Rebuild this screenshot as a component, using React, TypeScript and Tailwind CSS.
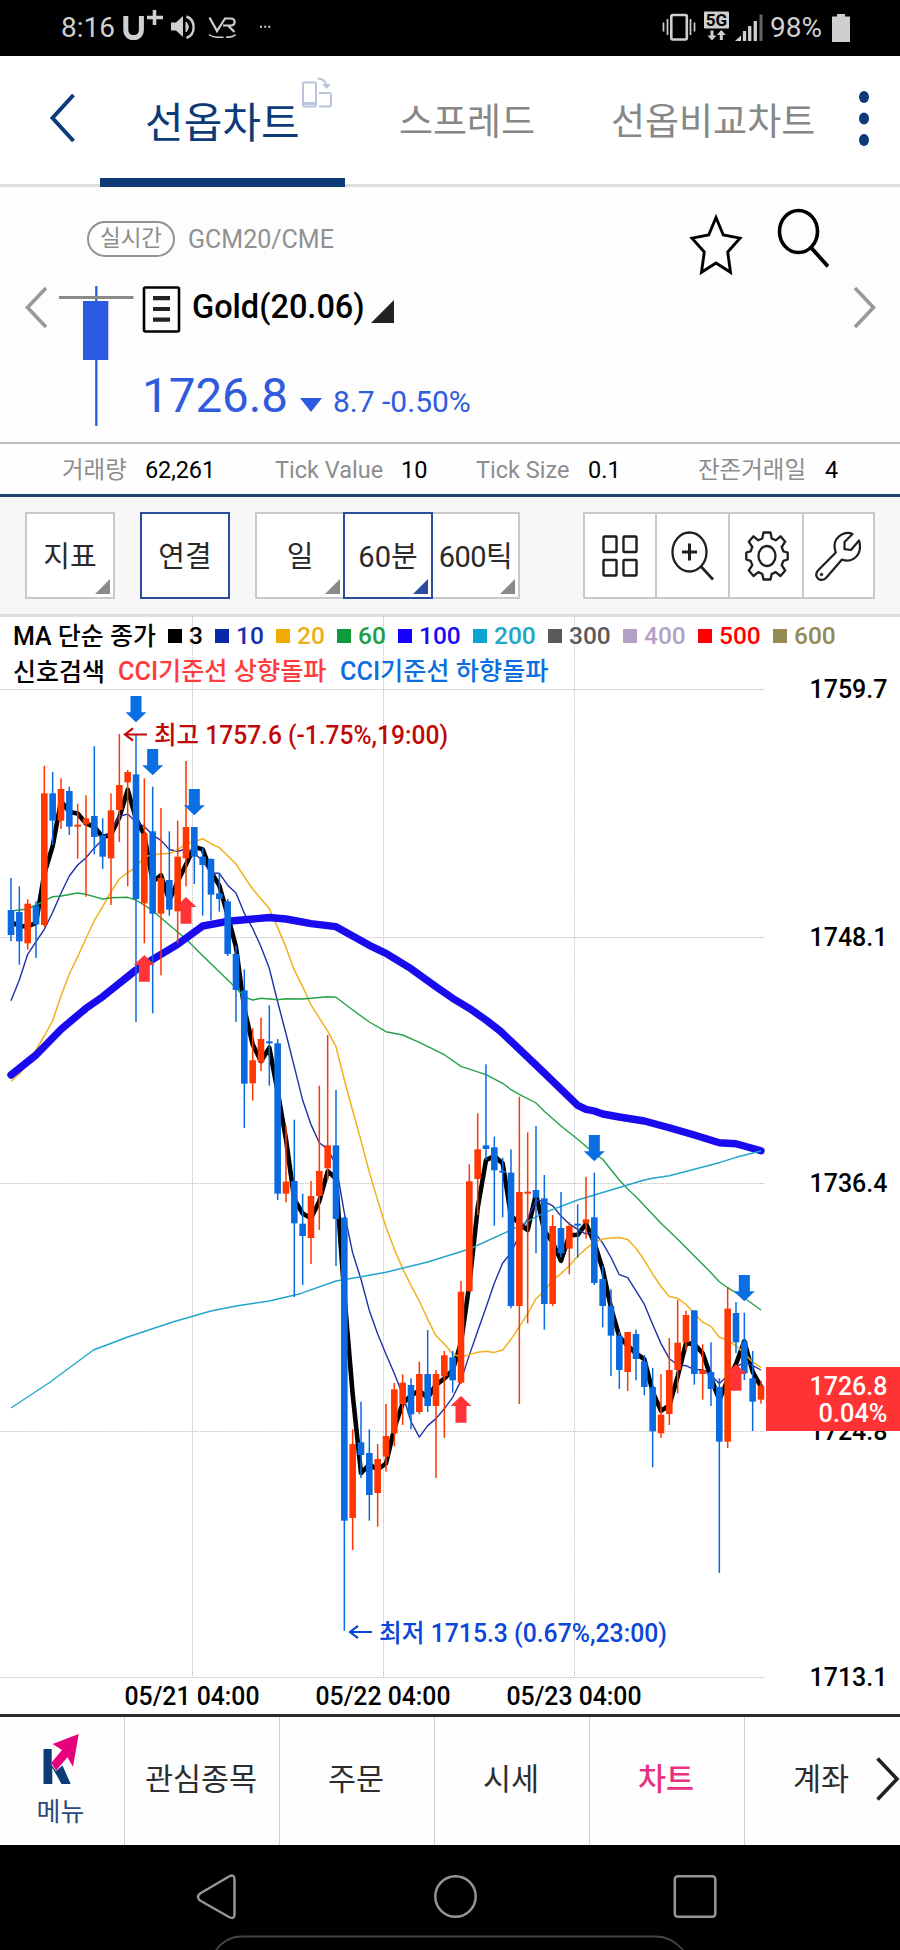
import React from "react";

const FONT = "font-['Roboto','Noto_Sans_CJK_KR',sans-serif]";

/* ---------- chart data ---------- */

type Row = [string, number, number, number, number];

// kind (B falling, R rising), high, body top, body bottom, low; three units per pixel below `base`
const SESSIONS: { base: number; rows: Row[] }[] = [
  {
    base: 680,
    rows: [
      ["B", 594, 690, 765, 784], ["B", 619, 696, 784, 854], ["R", 658, 671, 790, 809], ["B", 664, 677, 733, 834],
      ["R", 257, 340, 735, 740], ["B", 276, 340, 422, 495], ["R", 295, 327, 422, 447], ["B", 320, 333, 440, 465],
      ["R", 371, 434, 440, 536], ["R", 346, 415, 433, 650], ["B", 199, 408, 471, 523], ["B", 415, 466, 530, 567],
      ["R", 340, 391, 535, 675], ["R", 162, 315, 390, 486], ["R", 270, 276, 307, 619], ["B", 165, 283, 657, 1026],
      ["R", 295, 460, 670, 790], ["B", 320, 454, 701, 1000], ["R", 384, 594, 701, 886], ["B", 454, 600, 689, 707],
      ["R", 422, 530, 694, 790], ["R", 243, 441, 535, 619], ["B", 441, 441, 530, 612], ["B", 505, 530, 555, 707],
      ["B", 535, 537, 644, 720], ["B", 580, 640, 657, 695], ["B", 657, 664, 822, 828], ["B", 797, 822, 930, 1026],
      ["B", 868, 931, 1211, 1344],
    ],
  },
  {
    base: 900,
    rows: [
      ["R", 385, 481, 550, 602], ["R", 353, 417, 487, 513], ["B", 316, 424, 430, 557], ["B", 417, 430, 881, 900],
      ["R", 678, 845, 881, 907], ["B", 659, 843, 970, 1191], ["B", 881, 971, 1008, 1155], ["R", 843, 888, 1014, 1092],
      ["R", 557, 813, 888, 990], ["R", 405, 736, 805, 840], ["B", 570, 736, 957, 1098], ["B", 950, 953, 1862, 2192],
    ],
  },
  {
    base: 1200,
    rows: [
      ["R", 688, 732, 954, 1050], ["B", 605, 727, 765, 834], ["B", 688, 759, 885, 962], ["R", 732, 777, 879, 980],
      ["R", 612, 708, 770, 815], ["R", 549, 568, 700, 739], ["R", 523, 548, 612, 675], ["B", 535, 555, 643, 688],
      ["R", 485, 522, 636, 643], ["B", 390, 522, 618, 636], ["R", 510, 522, 618, 834], ["R", 453, 466, 529, 714],
      ["B", 453, 472, 541, 578], ["R", 243, 275, 548, 552],
    ],
  },
  {
    base: 1040,
    rows: [
      ["R", 373, 424, 754, 754], ["R", 220, 328, 417, 525], ["B", 73, 316, 327, 360], ["B", 290, 322, 391, 557],
      ["B", 353, 392, 398, 532], ["B", 328, 398, 798, 805], ["R", 170, 456, 798, 1092], ["R", 277, 455, 461, 850],
      ["B", 258, 450, 473, 640], ["B", 405, 475, 792, 869], ["R", 525, 558, 792, 798], ["B", 456, 564, 640, 652],
      ["R", 546, 558, 626, 703], ["B", 493, 551, 557, 653], ["R", 411, 538, 550, 596], ["B", 398, 532, 729, 735],
      ["B", 678, 717, 798, 862], ["B", 748, 798, 887, 1008], ["B", 875, 887, 990, 1047], ["R", 876, 876, 996, 1053],
      ["B", 869, 882, 957, 1021], ["B", 945, 964, 1041, 1066], ["B", 984, 1041, 1174, 1282],
    ],
  },
  {
    base: 1100,
    rows: [
      ["R", 822, 944, 1000, 1014], ["R", 714, 810, 942, 975], ["R", 600, 728, 810, 880], ["R", 632, 645, 727, 750],
      ["B", 631, 631, 822, 854], ["R", 733, 810, 822, 899], ["B", 727, 816, 867, 918], ["B", 835, 861, 1025, 1419],
      ["R", 562, 626, 1025, 1044], ["B", 606, 639, 727, 759], ["B", 638, 724, 820, 840], ["B", 753, 835, 905, 993],
      ["R", 842, 857, 899, 911],
    ],
  },
];

const CANDLES = SESSIONS.flatMap(({ base, rows }) =>
  rows.map(([kind, h, t, b, l]) => ({
    up: kind === "R",
    high: base + h / 3,
    top: base + t / 3,
    bottom: base + b / 3,
    low: base + l / 3,
  })),
);

const px = (i: number) => 11 + i * 8.3333;
const closes = CANDLES.map((c) => (c.up ? c.top + 0.5 : c.bottom - 0.5));

function average(period: number, lead: number[]): number[][] {
  return closes.map((_, i) => {
    if (i < lead.length) return [i, lead[i]];
    const part = closes.slice(Math.max(0, i - period + 1), i + 1);
    return [i, part.reduce((a, b) => a + b, 0) / part.length];
  });
}

const line = (pts: number[][]) => pts.map(([i, y]) => `${px(i).toFixed(1)},${y.toFixed(1)}`).join(" ");

const MA3 = average(3, [922, 926]);
const MA10 = average(10, [1000.7, 980, 954.3, 941.7, 929.3, 912.3, 893.3, 876, 865]);
const MA20 = average(20, [1081.3, 1074, 1063.3, 1050, 1036, 1020.7, 996, 974, 956.7, 938.3, 920.7, 906.7, 891.7, 879, 872.7, 867.3, 856.7, 855, 853.7]);
const MA60 = [
  [0, 911], [2, 909], [3, 905], [5, 896.7], [6, 896], [8, 893], [9, 894.3], [11, 899], [12, 897.7], [14, 897.3], [15, 900],
  [17, 910.7], [19, 925], [21, 939], [23, 955.7], [25, 971.7], [27, 988], [28, 997], [29, 1000], [30, 998.3], [32, 999.7],
  [33, 998.7], [35, 999], [38, 996.7], [39, 997.3], [41, 1010], [43, 1022], [45, 1031.7], [47, 1035], [49, 1042.3],
  [52, 1054.7], [54, 1066.3], [57, 1074.7], [59, 1083.3], [60, 1089.7], [61, 1094.3], [63, 1103], [64, 1111.3], [66, 1126],
  [68, 1139.3], [70, 1153.3], [71, 1159.3], [73, 1180], [74, 1189], [75, 1196.7], [78, 1223.3], [80, 1239.3], [82, 1256],
  [84, 1272.7], [85, 1281.7], [86, 1287.7], [88, 1298], [90, 1310],
];
const MA100 = [
  [0, 1075], [3, 1055], [6, 1029.3], [9, 1008.3], [11, 996.7], [15, 970], [17, 959.3], [20, 944.3], [23, 926], [26, 921.3],
  [31, 917.5], [33, 919], [36, 923.7], [39, 926.7], [43, 945.3], [45, 953.3], [48, 968.7], [51, 986.7], [53, 998.3],
  [55, 1008.3], [57, 1020], [58.7, 1031], [64, 1073], [68, 1105.3], [69, 1109.3], [70, 1111], [71, 1114], [73, 1117],
  [76, 1121], [79, 1127.7], [82, 1135], [85, 1142.7], [87, 1143.7], [90, 1150.7],
];
const MA200 = [
  [0, 1408], [4.7, 1382], [9.9, 1350], [14, 1337], [19.6, 1321.5], [24, 1311], [27, 1306], [31, 1301], [34.7, 1293.7],
  [39, 1281], [42, 1276.7], [45, 1272.3], [50, 1262], [55, 1249], [60, 1230], [64, 1212.7], [68, 1200], [72, 1190],
  [76, 1180], [77, 1178.3], [79, 1175.7], [85, 1162.7], [87, 1157.3], [90, 1151],
];

const DOWN = [[15, 696], [17, 749], [22, 789], [70, 1135], [88, 1275]];
const UP = [[16, 955], [21, 897], [54, 1396], [87, 1364]];

const LEVELS: [string, number][] = [
  ["1759.7", 689.5],
  ["1748.1", 937.5],
  ["1736.4", 1183.5],
  ["1724.8", 1431.5],
  ["1713.1", 1677.5],
];
const DAYS: [string, number][] = [
  ["05/21 04:00", 192.5],
  ["05/22 04:00", 383.5],
  ["05/23 04:00", 574.5],
];

function Chart() {
  return (
    <svg className="block h-[1097px] w-[900px] shrink-0" viewBox="0 617 900 1097">
      <g stroke="#c4c4c4" strokeWidth="1" strokeDasharray="1.5 1">
        {LEVELS.map(([t, y]) => (
          <line key={t} x1="0" x2="764" y1={y} y2={y} />
        ))}
        {DAYS.map(([t, x]) => (
          <line key={t} x1={x} x2={x} y1="617" y2="1677" />
        ))}
      </g>
      <g fill="none" strokeLinejoin="round">
        <polyline points={line(MA3)} stroke="#000" strokeWidth="4.6" />
        <polyline points={line(MA10)} stroke="#1f2fa8" strokeWidth="1.4" />
        <polyline points={line(MA20)} stroke="#eeb21c" strokeWidth="1.5" />
        <polyline points={line(MA60)} stroke="#24a148" strokeWidth="1.4" />
        <polyline points={line(MA100)} stroke="#1a0aee" strokeWidth="7.4" strokeLinecap="round" />
        <polyline points={line(MA200)} stroke="#22a5cc" strokeWidth="1.4" />
      </g>
      {CANDLES.map((c, i) => {
        const color = c.up ? "#ff3700" : "#0b6ae0";
        return (
          <g key={i} fill={color}>
            <rect x={px(i) - 0.75} y={c.high} width="1.5" height={c.low - c.high} />
            <rect x={px(i) - 3.3} y={c.top} width="6.6" height={Math.max(1.6, c.bottom - c.top)} />
          </g>
        );
      })}
      <g fill="#0b6fe4">
        {DOWN.map(([i, y]) => (
          <path key={i} transform={`translate(${px(i)} ${y})`} d="M-5.5 0h11v16.3h5L0 26.3l-10.5-10h5z" />
        ))}
      </g>
      <g fill="#ff3438">
        {UP.map(([i, y]) => (
          <path key={i} transform={`translate(${px(i)} ${y})`} d="M-5.5 26.8h11V10h5L0 0l-10.5 10h5z" />
        ))}
      </g>
      <g fill="none" strokeWidth="2.2">
        <path d="M147 734.5h-22m8-6.2-8 6.2 8 6.2" stroke="#c00808" />
        <path d="M372 1632h-22m8-6.2-8 6.2 8 6.2" stroke="#0a46d8" />
      </g>
      <g fontSize="25" fontWeight="500">
        <text x="154" y="743.5" fill="#c00808" textLength="294" lengthAdjust="spacingAndGlyphs">최고 1757.6 (-1.75%,19:00)</text>
        <text x="379" y="1641.5" fill="#0a46d8" textLength="288" lengthAdjust="spacingAndGlyphs">최저 1715.3 (0.67%,23:00)</text>
      </g>
      <g fontSize="26" fontWeight="500" fill="#000" textAnchor="end">
        {LEVELS.map(([t, y]) => (
          <text key={t} x="887.5" y={y + 8.5} textLength="78" lengthAdjust="spacingAndGlyphs">{t}</text>
        ))}
      </g>
      <g fontSize="25" fontWeight="500" fill="#000" textAnchor="middle">
        {DAYS.map(([t, x]) => (
          <text key={t} x={x - 0.5} y="1705" textLength="135" lengthAdjust="spacingAndGlyphs">{t}</text>
        ))}
      </g>
      <rect x="766" y="1367" width="134" height="64" fill="#ff3333" />
      <g fontSize="26" fontWeight="500" fill="#fff" textAnchor="end">
        <text x="887.5" y="1394.7" textLength="78" lengthAdjust="spacingAndGlyphs">1726.8</text>
        <text x="887.5" y="1422" textLength="69" lengthAdjust="spacingAndGlyphs">0.04%</text>
      </g>
    </svg>
  );
}

/* ---------- top of the screen ---------- */

function StatusBar() {
  return (
    <div className="flex h-[56px] items-center bg-black text-[#cfcfcf]">
      <span className="ml-[61px] w-[62px] text-[28px] leading-[56px]">8:16</span>
      <svg className="h-[56px] w-[160px]" viewBox="123 0 160 56" fill="none" stroke="#cfcfcf">
        <path d="M125.8 16v13.5c0 5 3 8 7.8 8s7.8-3 7.8-8V16" strokeWidth="5" />
        <path d="M154.500 10v15M147 17.500h16" strokeWidth="3.600" />
        <path d="M171 22.500h5l7-6.500v21l-7-6.500h-5z" fill="#cfcfcf" stroke="none" />
        <path d="M186 22c3 3 3 7 0 10z" fill="#cfcfcf" strokeWidth="1" />
        <path d="M186.500 16.500c9.500 3.500 9.500 18 0 21.500" strokeWidth="2.400" />
        <path d="M209.500 17.500 217 31l8-12.500h5.500c5.500 0 5.500 7 0 7H223m5 0 6.500 6.500" strokeWidth="2.200" />
        <path d="M209 34.500c3 3 9.500 3 14.500 2.800M226 37.300c4 0 8-.6 9.500-2.800" strokeWidth="1.500" />
        <path d="M260 26.700h2M264.200 26.700h2M268.300 26.700h2" strokeWidth="2" />
      </svg>
      <svg className="ml-[377px] h-[56px] w-[106px]" viewBox="660 0 106 56" fill="none" stroke="#cfcfcf">
        <rect x="671.300" y="15" width="15.500" height="24.500" rx="1.500" strokeWidth="2.600" />
        <path d="M663.500 22.500v9M667.500 19v16M690.500 19v16M694.500 22.500v9" strokeWidth="1.700" />
        <rect x="704" y="11.500" width="25" height="17" rx="1" fill="#cfcfcf" stroke="none" />
        <text x="716.500" y="26.300" fontSize="17" fontWeight="700" textAnchor="middle" fill="#000" stroke="none">5G</text>
        <path d="M710.500 30.500h3v5h3l-4.500 5-4.500-5h3zM719.800 40h3v-5h3l-4.500-5-4.500 5h3z" fill="#cfcfcf" stroke="none" />
        <path d="M735 41l6-5.500V41z" fill="#cfcfcf" stroke="none" />
        <path d="M744.500 41V31M749.700 41V26M755.300 41V21" strokeWidth="3.300" />
        <path d="M761 41V14.500" stroke="#666" strokeWidth="3" />
      </svg>
      <span className="ml-[4px] w-[62px] text-[28px] leading-[56px]">98%</span>
      <svg className="h-[28px] w-[18px]" viewBox="0 0 18 28" fill="#cfcfcf">
        <path d="M5 0h8v2.500h5V28H0V2.500h5z" />
      </svg>
    </div>
  );
}

function TabHeader() {
  return (
    <header className="flex h-[131px] border-b-[3px] border-[#dddddd] bg-white">
      <svg className="ml-[48px] mt-[37px] h-[50px] w-[30px]" viewBox="0 0 30 50" fill="none" stroke="#0d3b78" strokeWidth="4">
        <path d="M25.500 2 4.500 25l21 23" />
      </svg>
      <div className="relative ml-[22px] h-[131px] w-[245px] border-b-[9px] border-[#0d3b78] pl-[45px] pt-[36px] text-[42px] leading-[64px] text-[#0d3b78]">
        선옵차트
        <svg className="absolute left-[201px] top-[21px] h-[32px] w-[32px]" viewBox="0 0 32 32" fill="none" stroke="#bac4dc" strokeWidth="2">
          <rect x="2" y="5.500" width="13" height="24" rx="1" />
          <path d="M2 26.500h13" strokeWidth="3" />
          <path d="M18 16h10q2 0 2 2v9.500q0 2-2 2H18M16.500 1.500c5 0 8.500 3 9 8.500" />
          <path d="M22 7.500l3.700 4 3.300-4z" fill="#bac4dc" strokeWidth="1" />
        </svg>
      </div>
      <div className="ml-[54px] mt-[35px] w-[212px] text-[37px] leading-[64px] text-[#878787]">스프레드</div>
      <div className="mt-[35px] w-[248px] text-[37px] leading-[64px] text-[#878787]">선옵비교차트</div>
      <svg className="mt-[33px] h-[60px] w-[12px]" viewBox="0 0 12 60" fill="#0d3b78">
        <ellipse cx="5" cy="8" rx="5" ry="6" />
        <ellipse cx="5" cy="29.500" rx="5" ry="6" />
        <ellipse cx="5" cy="51" rx="5" ry="6" />
      </svg>
    </header>
  );
}

function Quote() {
  return (
    <section className="flex h-[257px] border-b-2 border-[#bfbfbf] bg-[#fdfdfd]">
      <svg className="ml-[24px] mt-[99px] h-[44px] w-[26px]" viewBox="0 0 26 44" fill="none" stroke="#999" strokeWidth="3.600">
        <path d="M22 2 3.500 21.500 22 41" />
      </svg>
      <svg className="ml-[9px] mt-[99px] h-[142px] w-[76px] shrink-0" viewBox="59 286 76 142">
        <path d="M96.300 286v140" stroke="#2b5be0" strokeWidth="2.300" />
        <rect x="83" y="301" width="25.300" height="59" fill="#2b5be0" />
        <path d="M59 297.500h74.500" stroke="#8a8a8a" strokeWidth="3" />
      </svg>
      <div className="relative flex w-[500px] flex-col">
        <div className="-ml-[48px] mt-[34px] flex h-[36px] items-center">
          <span className="flex h-[36px] w-[88px] items-center justify-center rounded-full border-2 border-[#929292] text-[22.500px] leading-none text-[#8d8d8d]">
            <span className="pb-[1px]">실시간</span>
          </span>
          <span className="ml-[13px] mt-[1px] text-[25px] leading-none text-[#919191]">GCM20/CME</span>
        </div>
        <div className="ml-[7px] mt-[29px] flex h-[47px]">
          <svg className="h-[47px] w-[39px]" viewBox="0 0 39 47" fill="none" stroke="#000">
            <rect x="2" y="1.500" width="35" height="44" rx="1.500" strokeWidth="2.600" />
            <path d="M11 12.200h17M11 23h17M11 33.700h17" stroke="#222" strokeWidth="4.200" />
          </svg>
          <span className="ml-[11px] mt-[-1px] w-[179px] text-[32.500px] font-medium leading-[44px] text-black">Gold(20.06)</span>
          <svg className="mt-[14px] h-[23px] w-[23px]" viewBox="0 0 23 23">
            <path d="M0 23 23 0v23z" fill="#222" />
          </svg>
        </div>
        <div className="ml-[7px] mt-[35px] flex h-[60px] items-baseline text-[#2f5bdc]">
          <span className="w-[158px] text-[47.500px] leading-[56px]">1726.8</span>
          <svg className="mr-[11px] h-[14px] w-[22px]" viewBox="0 0 22 14">
            <path d="M0 0h22L11 14z" fill="#2b5be0" />
          </svg>
          <span className="text-[30px] leading-[36px]">8.7 -0.50%</span>
        </div>
      </div>
      <svg className="ml-[54px] mt-[20px] h-[70px] w-[140px] shrink-0" viewBox="688 207 140 70" fill="none" stroke="#000">
        <path d="M715 217.500l7.300 17.500 16.700 3.200-12.300 13.800 2.800 20.300L715 263l-14.500 9.300 2.800-20.300L691 238.200l16.700-3.200z" strokeWidth="2.900" />
        <ellipse cx="797.500" cy="231.500" rx="19" ry="21" strokeWidth="3.600" />
        <path d="M810 247.500l17 19" strokeWidth="3.800" />
      </svg>
      <svg className="ml-[23px] mt-[99px] h-[44px] w-[26px] shrink-0" viewBox="0 0 26 44" fill="none" stroke="#999" strokeWidth="3.600">
        <path d="M3 2l18.500 19.500L3 41" />
      </svg>
    </section>
  );
}

function Metrics() {
  return (
    <section className="flex h-[53px] items-center border-b-[3px] border-[#1d4470] bg-[#fefefe] pt-[3px] text-[23.500px] leading-none text-black">
      <span className="ml-[62px] w-[83px] text-[23.500px] text-[#8d8d8d]">거래량</span>
      <span className="w-[130px] tracking-[-0.100px]">62,261</span>
      <span className="w-[126px] text-[#8d8d8d]">Tick Value</span>
      <span className="w-[75px]">10</span>
      <span className="w-[112px] text-[#8d8d8d]">Tick Size</span>
      <span className="w-[110px]">0.1</span>
      <span className="w-[127px] text-[23.500px] text-[#8d8d8d]">잔존거래일</span>
      <span>4</span>
    </section>
  );
}

/* ---------- toolbar ---------- */

function Corner({ blue }: { blue?: boolean }) {
  return (
    <svg className="absolute bottom-[3px] right-[3px] h-[15px] w-[15px]" viewBox="0 0 15 15">
      <path d="M0 15 15 0v15z" fill={blue ? "#2a4d9f" : "#8a8a8a"} />
    </svg>
  );
}

function Toolbar() {
  const box = "relative flex h-[87px] shrink-0 items-center justify-center bg-white pt-[3px] text-[29px] leading-none text-[#2a2a2a] border-2";
  return (
    <section className="flex h-[120px] border-b-[3px] border-[#dddddd] bg-[#f7f7f7] pl-[25px] pt-[15px]">
      <div className={`${box} w-[90px] border-[#c9c9c9]`}>지표<Corner /></div>
      <div className={`${box} ml-[25px] w-[90px] border-[#2a4d9f]`}>연결</div>
      <div className={`${box} ml-[25px] w-[90px] border-[#c9c9c9]`}>일<Corner /></div>
      <div className={`${box} z-10 -ml-[2px] w-[90px] border-[#2a4d9f]`}>60분<Corner blue /></div>
      <div className={`${box} -ml-[2px] w-[89px] border-[#c9c9c9] tracking-[-0.500px]`}>600틱<Corner /></div>
      <div className="ml-[63px] flex h-[87px] w-[292px] divide-x-2 divide-[#c9c9c9] border-2 border-[#c9c9c9] bg-white">
        <div className="flex flex-1 items-center justify-center">
          <svg className="h-[42px] w-[36px]" viewBox="0 0 36 42" fill="none" stroke="#1f1f1f" strokeWidth="2.400">
            <rect x="1.500" y="1.500" width="13" height="15.500" rx="1" />
            <rect x="21.500" y="1.500" width="13" height="15.500" rx="1" />
            <rect x="1.500" y="25" width="13" height="15.500" rx="1" />
            <rect x="21.500" y="25" width="13" height="15.500" rx="1" />
          </svg>
        </div>
        <div className="flex flex-1 items-center justify-center pl-[2px]">
          <svg className="h-[50px] w-[44px]" viewBox="0 0 44 50" fill="none" stroke="#1f1f1f">
            <ellipse cx="18.500" cy="21" rx="17" ry="19.500" strokeWidth="2.300" />
            <path d="M30 35.500 42 48.500" strokeWidth="2.600" />
            <path d="M18.500 12.500v17M11 21h15" strokeWidth="3" />
          </svg>
        </div>
        <div className="flex flex-1 items-center justify-center pl-[2px]">
          <svg className="h-[50px] w-[44px]" viewBox="0 0 44 50" fill="none" stroke="#1f1f1f" strokeWidth="2.300" strokeLinejoin="round">
            <path d="M18.500 1.500h7l1.200 6 4 1.800 4.800-4 4.700 5.400-3.500 5.300 1.700 4.300 4.300 1.200v7l-4.300 1.400-1.700 4.300 3.500 5.300-4.700 5.500-4.800-3.900-4 1.900-1.200 5.500h-7l-1.200-5.500-4-1.900-4.800 3.900-4.700-5.500 3.500-5.300-1.700-4.300-4.300-1.400v-7l4.300-1.200 1.700-4.300-3.500-5.300 4.700-5.400 4.800 4 4-1.800z" />
            <ellipse cx="22" cy="25" rx="8.500" ry="10" />
          </svg>
        </div>
        <div className="flex flex-1 items-center justify-center">
          <svg className="h-[50px] w-[46px]" viewBox="0 0 46 50" fill="none" stroke="#1f1f1f" strokeWidth="2.200" strokeLinejoin="round">
            <path d="M37.500 3c-7-3.500-17.500 2-18 11.500 0 3 .5 5 1.300 7L3 39.500c-2.500 3-2 6 0 8s5.500 2 8-.5l16-18.500c7.500 3.500 18-1.500 18-13 0-2-.3-4-1-6L36 19l-6.500-.8V11z" />
            <circle cx="6.500" cy="43.500" r="1.300" fill="#1f1f1f" strokeWidth=".8" />
          </svg>
        </div>
      </div>
    </section>
  );
}

const LEGEND: [string, string, string][] = [
  ["3", "bg-black text-black", "w-[47px]"],
  ["10", "bg-[#0a28aa] text-[#1530b0]", "w-[61px]"],
  ["20", "bg-[#f0ab00] text-[#ebb01e]", "w-[61px]"],
  ["60", "bg-[#0f9b3a] text-[#239c45]", "w-[61px]"],
  ["100", "bg-[#1400ff] text-[#1a0aee]", "w-[75px]"],
  ["200", "bg-[#0aa5d2] text-[#22a5c8]", "w-[75px]"],
  ["300", "bg-[#5a5a5a] text-[#5a5a5a]", "w-[75px]"],
  ["400", "bg-[#b3a2c7] text-[#b3a2c7]", "w-[75px]"],
  ["500", "bg-[#ff0000] text-[#ff0000]", "w-[75px]"],
  ["600", "bg-[#948a54] text-[#948a54]", "w-[75px]"],
];

function Legend() {
  return (
    <div className="absolute left-[13px] top-0 text-[25px] font-medium leading-none">
      <div className="mt-[4px] flex h-[30px] items-center">
        <span className="w-[155px] whitespace-nowrap">MA 단순 종가</span>
        {LEGEND.map(([n, c, w]) => (
          <span key={n} className={`flex shrink-0 items-center ${w}`}>
            <span className={`mr-[7px] h-[14px] w-[14px] ${c}`} />
            <span className={`bg-transparent! text-[24.500px] ${c}`}>{n}</span>
          </span>
        ))}
      </div>
      <div className="mt-[6px] flex h-[30px] items-center whitespace-nowrap">
        <span className="w-[105px]">신호검색</span>
        <span className="w-[222px] text-[25.200px] text-[#ff3b3b]">CCI기준선 상향돌파</span>
        <span className="text-[25.200px] text-[#0b6fe0]">CCI기준선 하향돌파</span>
      </div>
    </div>
  );
}

/* ---------- bottom ---------- */

function BottomNav() {
  const cell = "flex w-[155px] shrink-0 items-center justify-center border-l border-[#d0d0d0] pb-[2px] pr-[2px] text-[30.500px] leading-none text-[#2d2d2d]";
  return (
    <nav className="relative flex h-[131px] overflow-hidden border-t-[3px] border-[#2a2a2a] bg-[#fefefe]">
      <div className="flex w-[124px] shrink-0 flex-col items-center pr-[3px] text-[26px] leading-none text-[#2c4a80]">
        <svg className="mt-[16px] h-[52px] w-[40px]" viewBox="40 1733 40 52">
          <path d="M42.500 1749h8.200v16l4.300 6 6.500-5.500 8.200 18.500h-9.200l-9.200-16.500V1784h-8.800z" fill="#0d3b78" />
          <path d="M77.700 1734l-5.700 32.800-5.600-9.600L55.200 1770.500l-5-7.500 10.800-13-9.400-6z" fill="#e6007e" />
        </svg>
        <span className="mt-[14px]">메뉴</span>
      </div>
      <div className={cell}>관심종목</div>
      <div className={cell}>주문</div>
      <div className={cell}>시세</div>
      <div className="flex w-[155px] shrink-0 items-center justify-center border-l border-[#d0d0d0] pb-[2px] pr-[2px] text-[30.500px] font-medium leading-none text-[#e8327f]">차트</div>
      <div className={cell}>계좌</div>
      <svg className="absolute left-[873px] top-[39px] h-[46px] w-[28px]" viewBox="0 0 28 46" fill="none" stroke="#222" strokeWidth="3.600">
        <path d="M4.500 2.500 24 23 4.500 43.500" />
      </svg>
    </nav>
  );
}

function SystemNav() {
  return (
    <div className="h-[105px] bg-black">
      <svg className="block h-[105px] w-[900px]" viewBox="0 1845 900 105" fill="none" stroke="#959595" strokeWidth="2.500">
        <path d="M229 1876.500q5.500-3 5.500 3v34.500q0 6-5.500 3l-29-16.500q-4-3.500 0-7z" strokeLinejoin="round" />
        <circle cx="455.500" cy="1896.500" r="20.200" />
        <rect x="674.800" y="1876.300" width="40.500" height="40.500" rx="3" />
        <path d="M216 1950c6-8 14-13.500 26-13.500h414c12 0 20 5.500 27 13.500" stroke="#444" strokeWidth="1.800" />
      </svg>
    </div>
  );
}

export default function App() {
  return (
    <div className={`flex h-[1950px] w-[900px] flex-col overflow-hidden bg-white ${FONT}`}>
      <StatusBar />
      <TabHeader />
      <Quote />
      <Metrics />
      <Toolbar />
      <main className="relative h-[1097px] shrink-0">
        <Chart />
        <Legend />
      </main>
      <BottomNav />
      <SystemNav />
    </div>
  );
}
